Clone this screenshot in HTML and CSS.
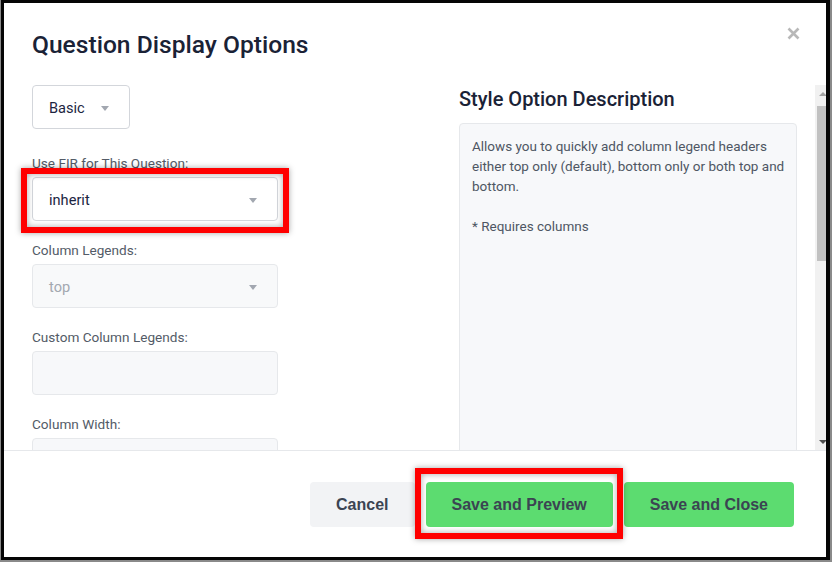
FILE: index.html
```html
<!DOCTYPE html>
<html lang="en">
  <head>
    <meta charset="UTF-8" />
    <meta name="viewport" content="width=device-width, initial-scale=1.0" />
    <title>Question Display Options</title>

    <link rel="stylesheet" href="styles.css">
  </head>
  <body>
    <div class="screen">
      <div class="modal">
        <header class="modal-header">
          <h1>Question Display Options</h1>
          <button class="close" aria-label="Close">
            <svg width="13" height="13" viewBox="0 0 13 13">
              <path d="M1.5 1.5 L11.5 11.5 M11.5 1.5 L1.5 11.5" stroke="currentColor" stroke-width="2.6" />
            </svg>
          </button>
        </header>

        <div class="modal-body">
          <div class="modal-scroll">
            <div class="options">
              <div class="options-form">
                <div class="select view-select">
                  <span>Basic</span>
                  <i class="caret"></i>
                </div>

                <div class="field">
                  <label>Use FIR for This Question:</label>
                  <div class="marked marked-field">
                    <div class="select">
                      <span>inherit</span>
                      <i class="caret"></i>
                    </div>
                  </div>
                </div>

                <div class="field">
                  <label>Column Legends:</label>
                  <div class="select disabled">
                    <span>top</span>
                    <i class="caret"></i>
                  </div>
                </div>

                <div class="field">
                  <label>Custom Column Legends:</label>
                  <div class="input"></div>
                </div>

                <div class="field">
                  <label>Column Width:</label>
                  <div class="input"></div>
                </div>
              </div>

              <aside class="description">
                <h2>Style Option Description</h2>
                <div class="description-box">
                  <p>Allows you to quickly add column legend headers<br>either top only (default), bottom only or both top and<br>bottom.</p>
                  <p>* Requires columns</p>
                </div>
              </aside>
            </div>
          </div>

          <!-- classic scrollbar of the options pane -->
          <div class="scrollbar">
            <span class="arrow up"></span>
            <span class="track"><span class="thumb"></span></span>
            <span class="arrow down"></span>
          </div>
        </div>

        <footer class="modal-footer">
          <button class="btn btn-cancel">Cancel</button>
          <button class="btn btn-save marked marked-button">Save and Preview</button>
          <button class="btn btn-save">Save and Close</button>
        </footer>
      </div>
    </div>
  </body>
</html>
```

FILE: styles.css
```css
* {
  box-sizing: border-box;
}

body {
  margin: 0;
  font-family: Roboto, "Noto Sans", sans-serif;
  background: #fff;
}

.screen {
  position: relative;
  width: 832px;
  height: 562px;
  overflow: hidden;
  background: #fff;

  /* black frame around the window */
  &::after {
    content: "";
    position: absolute;
    top: 0;
    left: 1px;
    right: 2px;
    bottom: 2px;
    border-style: solid;
    border-color: #050505;
    border-width: 3px 4px 3px 3px;
    box-shadow: 0 0 0 2px #8a8a8a;
    pointer-events: none;
  }
}

.modal {
  display: flex;
  flex-direction: column;
  height: 100%;
}

.modal-header {
  display: flex;
  justify-content: space-between;
  align-items: flex-start;
  height: 85px;
  padding: 29px 32px 0 32px;

  h1 {
    margin: 0;
    font-size: 24.6px;
    line-height: 32px;
    font-weight: 500;
    color: #1a2236;
  }

  .close {
    display: flex;
    padding: 0;
    margin-top: -2px;
    border: 0;
    background: none;
    color: #b8b8b8;
    cursor: pointer;
  }
}

.modal-body {
  display: flex;
  height: 365px;
  padding-right: 2px;
}

.modal-scroll {
  flex: 1;
  overflow: hidden;
  padding: 0 18px 0 32px;
}

.options {
  display: grid;
  grid-template-columns: 1fr 338px;
  column-gap: 32px;
}

.options-form {
  display: flex;
  flex-direction: column;
  align-items: flex-start;
}

.field {
  width: 246px;
  margin-top: 17px;

  label {
    display: block;
    padding-top: 2px;
    font-size: 13.6px;
    line-height: 20px;
    color: #535b67;
    margin-bottom: 4px;
  }
}

.select {
  display: flex;
  align-items: center;
  justify-content: space-between;
  height: 44px;
  padding: 2px 20px 0 16px;
  background: #fff;
  border: 1px solid #d3d6db;
  border-radius: 4px;
  font-size: 14.6px;
  color: #1c2541;

  .caret {
    width: 0;
    height: 0;
    border-left: 4.5px solid transparent;
    border-right: 4.5px solid transparent;
    border-top: 5px solid #a2a7b0;
  }

  &.view-select {
    display: inline-flex;
    gap: 16px;
    margin-bottom: 5px;
  }

  &.disabled {
    background: #f8f9fa;
    border-color: #e6e8eb;
    color: #a3a8b0;
  }
}

.input {
  height: 44px;
  background: #f7f8fa;
  border: 1px solid #e6e8eb;
  border-radius: 4px;
}

.description {
  h2 {
    margin: 0 0 10px;
    padding-top: 1px;
    font-size: 20px;
    line-height: 27px;
    font-weight: 500;
    color: #1a2236;
  }
}

.description-box {
  height: 360px;
  padding: 12px 6px 12px 12px;
  background: #f7f8fa;
  border: 1px solid #e6e8eb;
  border-radius: 4px;
  font-size: 13.5px;
  line-height: 20px;
  color: #4e5663;

  p {
    margin: 0;
    white-space: nowrap;
  }

  p + p {
    margin-top: 20px;
  }
}

.scrollbar {
  display: flex;
  flex-direction: column;
  width: 15px;
  background: #f1f1f1;

  .arrow {
    display: flex;
    justify-content: center;
    align-items: center;
    height: 17px;

    &::before {
      content: "";
      width: 0;
      height: 0;
      border-left: 4px solid transparent;
      border-right: 4px solid transparent;
    }

    &.up::before {
      border-bottom: 4px solid #a3a3a3;
    }

    &.down::before {
      border-top: 4px solid #505050;
    }
  }

  .track {
    flex: 1;
    padding: 4px 2px 0;
  }

  .thumb {
    display: block;
    height: 155px;
    background: #c1c1c1;
  }
}

.modal-footer {
  display: flex;
  justify-content: flex-end;
  gap: 11px;
  flex: 1;
  padding: 31px 38px 0 0;
  border-top: 1px solid #e6e8eb;
}

.btn {
  height: 45px;
  padding: 0 26px;
  border: 0;
  border-radius: 4px;
  font-family: "Liberation Sans", Arial, sans-serif;
  font-size: 16px;
  font-weight: 700;
  color: #3b4452;
  cursor: pointer;
}

.btn-cancel {
  background: #f2f3f5;
}

.btn-save {
  background: #5cdc70;
}

/* red callout boxes drawn over a control */
.marked {
  position: relative;

  &::after {
    content: "";
    position: absolute;
    border: 6px solid #ff0000;
    box-shadow: 0 0 6px rgba(0, 0, 0, 0.35), inset 0 0 6px rgba(0, 0, 0, 0.35);
    pointer-events: none;
  }
}

.marked-field::after {
  inset: -9px -11px -12px -11px;
}

.marked-button::after {
  inset: -14px -10px -12px -11px;
}
```
